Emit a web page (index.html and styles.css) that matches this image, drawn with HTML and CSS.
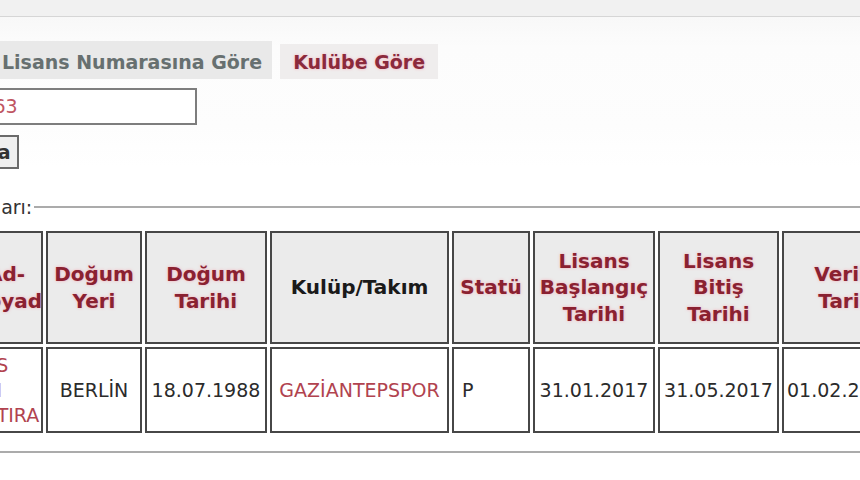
FILE: index.html
```html
<!DOCTYPE html>
<html lang="tr">
<head>
<meta charset="utf-8">
<title>Lisans Sorgulama</title>
<link rel="stylesheet" href="styles.css">
</head>
<body>
<div class="topbar"></div>
<div class="page">
  <div class="tabs">
    <div class="tab tab-hidden">Ada Göre</div>
    <div class="tab tab-active">Lisans Numarasına Göre</div>
    <div class="tab tab-link">Kulübe Göre</div>
  </div>
  <div class="form">
    <label class="lbl">Lisans No :</label>
    <div class="input">10212563</div>
    <span class="lbl"></span>
    <div class="btn-cell"><span class="btn">Sorgula</span></div>
  </div>
  <fieldset class="results">
    <legend>Arama Sonuçları:</legend>
    <table class="grid">
      <thead>
        <tr>
          <th class="c1">Ad-<br>Soyad</th>
          <th class="c2">Doğum<br>Yeri</th>
          <th class="c3">Doğum<br>Tarihi</th>
          <th class="c4 dark">Kulüp/Takım</th>
          <th class="c5">Statü</th>
          <th class="c6">Lisans<br>Başlangıç<br>Tarihi</th>
          <th class="c7">Lisans<br>Bitiş<br>Tarihi</th>
          <th class="c8">Veriliş<br>Tarihi</th>
        </tr>
      </thead>
      <tbody>
        <tr>
          <td class="red name">YAS<br>ALI<br>KATIRA</td>
          <td>BERLİN</td>
          <td>18.07.1988</td>
          <td class="red">GAZİANTEPSPOR</td>
          <td class="left">P</td>
          <td>31.01.2017</td>
          <td>31.05.2017</td>
          <td class="last">01.02.2017</td>
        </tr>
      </tbody>
    </table>
  </fieldset>
</div>
</body>
</html>
```

FILE: styles.css
```css
html, body {
  margin: 0;
  padding: 0;
  background: #ffffff;
  overflow: hidden;
}

body {
  font-family: "DejaVu Sans", Verdana, sans-serif;
  color: #2a2a2a;
  width: 860px;
  height: 480px;
}

.topbar {
  height: 16px;
  background: #f1f1f1;
  border-bottom: 1px solid #d6d6d6;
  box-shadow: 0 2px 0 #f4f4f4;
}

.page {
  margin-left: -200px;
  width: 1300px;
  background: linear-gradient(#f8f8f8 0px, #fcfcfc 30px, #fdfdfd 110px, #ffffff 150px);
}

.tabs {
  display: flex;
  gap: 8px;
  padding-top: 24px;
  height: 38px;
}

.tab {
  height: 38px;
  box-sizing: border-box;
  padding: 0 10px;
  font-size: 19px;
  font-weight: bold;
  line-height: 42px;
  white-space: nowrap;
}

.tab-hidden {
  flex: 0 0 184px;
  background: #eeeeee;
  color: #8b2a3c;
}

.tab-active {
  background: #e9e9e9;
  color: #677070;
}

.tab-link {
  margin-top: 3px;
  height: 35px;
  line-height: 36px;
  padding: 0 13px;
  background: #efeded;
  color: #8b2a3c;
  text-shadow: 0 0 3px rgba(255, 120, 140, 0.55);
}

.form {
  display: grid;
  grid-template-columns: 118px auto;
  justify-content: start;
  padding-top: 9px;
  row-gap: 10px;
}

.lbl {
  font-size: 19px;
  color: #333;
}

.input {
  width: 279px;
  height: 37px;
  box-sizing: border-box;
  border: 2px solid #7d7d7d;
  background: #ffffff;
  padding: 0 1px;
  font-size: 19px;
  line-height: 33px;
  color: #bf5562;
}

.btn-cell {
  height: 34px;
}

.btn {
  display: inline-block;
  height: 34px;
  box-sizing: border-box;
  border: 2px solid #6a6a6a;
  background: #efefef;
  padding: 0 6px 0 8px;
  font-size: 19px;
  font-weight: bold;
  line-height: 30px;
  color: #333;
}

.results {
  margin: 27px 0 0 40px;
  border: 2px solid #ababab;
  border-left-color: #bbbbbb;
  padding: 10px 0 15px 0;
  min-width: 0;
}

.results legend {
  margin-left: 25px;
  padding: 0 2px;
  font-size: 19px;
  line-height: 22px;
  color: #333;
}

.grid {
  margin-left: 124px;
  border-collapse: separate;
  border-spacing: 3px;
  table-layout: fixed;
  width: 954px;
}

.grid th,
.grid td {
  box-sizing: border-box;
  border: 2px solid #474747;
  text-align: center;
  vertical-align: middle;
  padding: 0 2px;
}

.grid th {
  height: 113px;
  background: #ebebeb;
  font-size: 20px;
  font-weight: bold;
  line-height: 26.5px;
  color: #8a2131;
  text-shadow: 0 0 3px rgba(255, 110, 130, 0.5);
}

.grid th.dark {
  color: #1a1a1a;
  text-shadow: none;
}

.grid td {
  height: 86px;
  background: #ffffff;
  font-size: 19px;
  line-height: 25px;
  color: #2b2b2b;
}

.grid td.red {
  color: #b1434f;
}

.grid td.name {
  text-align: left;
}

.grid td.left {
  text-align: left;
  padding-left: 8px;
}

.grid td.last {
  text-align: left;
  padding-left: 3px;
}

.c1 { width: 74px; }
.c2 { width: 96px; }
.c3 { width: 122px; }
.c4 { width: 179px; }
.c5 { width: 78px; }
.c6 { width: 122px; }
.c7 { width: 121px; }
.c8 { width: 135px; }
```
